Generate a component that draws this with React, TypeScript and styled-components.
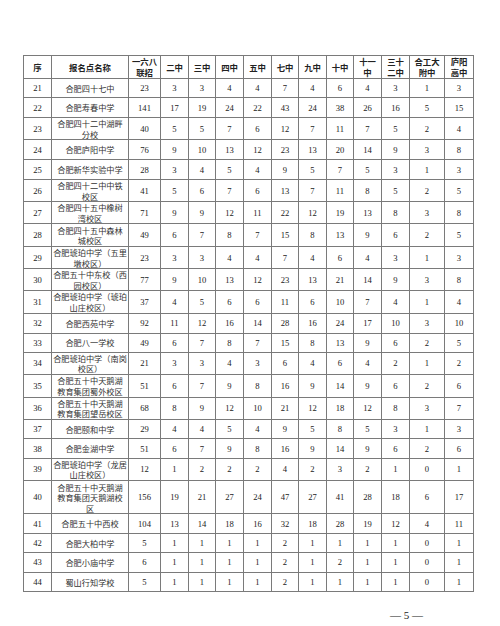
import React from "react";
import styled, { createGlobalStyle } from "styled-components";

const Global = createGlobalStyle`
  html, body { margin: 0; padding: 0; background: #fff; }
  body { font-family: "Liberation Serif", "Noto Sans CJK SC", serif; color: #222; }
`;

const Page = styled.div`
  width: 500px;
  height: 626px;
  box-sizing: border-box;
  padding: 55px 0 0 23px;
  background: #fff;
  overflow: hidden;
`;

const Table = styled.table`
  border-collapse: collapse;
  table-layout: fixed;
  width: 450px;
  border: 1.2px solid #6a6a6a;
`;

const HeadCell = styled.th`
  border: 1px solid #7a7a7a;
  padding: 0;
  height: 22px;
  font-family: "Noto Sans CJK SC", sans-serif;
  font-weight: 700;
  font-size: 8.4px;
  line-height: 10.6px;
  text-align: center;
  vertical-align: middle;
  color: #222;
`;

const Row = styled.tr<{ $h: number }>`
  height: ${(p) => p.$h}px;
`;

const NumCell = styled.td`
  border: 1px solid #7a7a7a;
  padding: 0;
  font-family: "Liberation Serif", serif;
  font-size: 8.6px;
  line-height: 10px;
  text-align: center;
  vertical-align: middle;
  color: #222;
`;

const NameCell = styled.td`
  border: 1px solid #7a7a7a;
  padding: 0;
  font-family: "Noto Sans CJK SC", sans-serif;
  font-size: 8.2px;
  line-height: 10.5px;
  text-align: center;
  vertical-align: middle;
  color: #333;
  white-space: nowrap;
  overflow: hidden;
`;

const Footer = styled.div`
  width: 450px;
  margin-top: 16px;
  display: flex;
  justify-content: flex-end;
  padding-right: 50px;
  box-sizing: border-box;
  font-family: "Liberation Serif", serif;
  font-size: 11px;
  line-height: 14px;
  color: #222;
`;

const widths = [28, 77, 32, 28, 27, 28, 28, 27, 28, 27, 28, 28, 35, 29];

const headers: string[][] = [
  ["序"],
  ["报名点名称"],
  ["一六八", "联招"],
  ["二中"],
  ["三中"],
  ["四中"],
  ["五中"],
  ["七中"],
  ["九中"],
  ["十中"],
  ["十一", "中"],
  ["三十", "二中"],
  ["合工大", "附中"],
  ["庐阳", "高中"],
];

type R = { id: number; name: string[]; nums: number[]; h: number };

const rows: R[] = [
  { id: 21, name: ["合肥四十七中"], nums: [23, 3, 3, 4, 4, 7, 4, 6, 4, 3, 1, 3], h: 19 },
  { id: 22, name: ["合肥寿春中学"], nums: [141, 17, 19, 24, 22, 43, 24, 38, 26, 16, 5, 15], h: 20 },
  { id: 23, name: ["合肥四十二中湖畔", "分校"], nums: [40, 5, 5, 7, 6, 12, 7, 11, 7, 5, 2, 4], h: 21.6 },
  { id: 24, name: ["合肥庐阳中学"], nums: [76, 9, 10, 13, 12, 23, 13, 20, 14, 9, 3, 8], h: 20 },
  { id: 25, name: ["合肥新华实验中学"], nums: [28, 3, 4, 5, 4, 9, 5, 7, 5, 3, 1, 3], h: 20 },
  { id: 26, name: ["合肥四十二中中铁", "校区"], nums: [41, 5, 6, 7, 6, 13, 7, 11, 8, 5, 2, 5], h: 21.7 },
  { id: 27, name: ["合肥四十五中橡树", "湾校区"], nums: [71, 9, 9, 12, 11, 22, 12, 19, 13, 8, 3, 8], h: 22.3 },
  { id: 28, name: ["合肥四十五中森林", "城校区"], nums: [49, 6, 7, 8, 7, 15, 8, 13, 9, 6, 2, 5], h: 22.7 },
  { id: 29, name: ["合肥琥珀中学（五里", "墩校区）"], nums: [23, 3, 3, 4, 4, 7, 4, 6, 4, 3, 1, 3], h: 22.3 },
  { id: 30, name: ["合肥五十中东校（西", "园校区）"], nums: [77, 9, 10, 13, 12, 23, 13, 21, 14, 9, 3, 8], h: 22 },
  { id: 31, name: ["合肥琥珀中学（琥珀", "山庄校区）"], nums: [37, 4, 5, 6, 6, 11, 6, 10, 7, 4, 1, 4], h: 22.4 },
  { id: 32, name: ["合肥西苑中学"], nums: [92, 11, 12, 16, 14, 28, 16, 24, 17, 10, 3, 10], h: 20 },
  { id: 33, name: ["合肥八一学校"], nums: [49, 6, 7, 8, 7, 15, 8, 13, 9, 6, 2, 5], h: 19 },
  { id: 34, name: ["合肥琥珀中学（南岗", "校区）"], nums: [21, 3, 3, 4, 3, 6, 4, 6, 4, 2, 1, 2], h: 22.6 },
  { id: 35, name: ["合肥五十中天鹅湖", "教育集团蜀外校区"], nums: [51, 6, 7, 9, 8, 16, 9, 14, 9, 6, 2, 6], h: 22.4 },
  { id: 36, name: ["合肥五十中天鹅湖", "教育集团望岳校区"], nums: [68, 8, 9, 12, 10, 21, 12, 18, 12, 8, 3, 7], h: 22 },
  { id: 37, name: ["合肥颐和中学"], nums: [29, 4, 4, 5, 4, 9, 5, 8, 5, 3, 1, 3], h: 19.6 },
  { id: 38, name: ["合肥金湖中学"], nums: [51, 6, 7, 9, 8, 16, 9, 14, 9, 6, 2, 6], h: 19.6 },
  { id: 39, name: ["合肥琥珀中学（龙居", "山庄校区）"], nums: [12, 1, 2, 2, 2, 4, 2, 3, 2, 1, 0, 1], h: 22.3 },
  { id: 40, name: ["合肥五十中天鹅湖", "教育集团天鹅湖校", "区"], nums: [156, 19, 21, 27, 24, 47, 27, 41, 28, 18, 6, 17], h: 33.3 },
  { id: 41, name: ["合肥五十中西校"], nums: [104, 13, 14, 18, 16, 32, 18, 28, 19, 12, 4, 11], h: 19.4 },
  { id: 42, name: ["合肥大柏中学"], nums: [5, 1, 1, 1, 1, 2, 1, 1, 1, 1, 0, 1], h: 19.3 },
  { id: 43, name: ["合肥小庙中学"], nums: [6, 1, 1, 1, 1, 2, 1, 2, 1, 1, 0, 1], h: 19.7 },
  { id: 44, name: ["蜀山行知学校"], nums: [5, 1, 1, 1, 1, 2, 1, 1, 1, 1, 0, 1], h: 19.3 },
];

const Lines: React.FC<{ lines: string[] }> = ({ lines }) => (
  <>
    {lines.map((l, i) => (
      <React.Fragment key={i}>
        {i > 0 && <br />}
        {l}
      </React.Fragment>
    ))}
  </>
);

export default function App() {
  return (
    <>
      <Global />
      <Page>
        <Table>
          <colgroup>
            {widths.map((w, i) => (
              <col key={i} style={{ width: w }} />
            ))}
          </colgroup>
          <thead>
            <tr>
              {headers.map((h, i) => (
                <HeadCell key={i}>
                  <Lines lines={h} />
                </HeadCell>
              ))}
            </tr>
          </thead>
          <tbody>
            {rows.map((r) => (
              <Row key={r.id} $h={r.h}>
                <NumCell>{r.id}</NumCell>
                <NameCell>
                  <Lines lines={r.name} />
                </NameCell>
                {r.nums.map((n, i) => (
                  <NumCell key={i}>{n}</NumCell>
                ))}
              </Row>
            ))}
          </tbody>
        </Table>
        <Footer>— 5 —</Footer>
      </Page>
    </>
  );
}
